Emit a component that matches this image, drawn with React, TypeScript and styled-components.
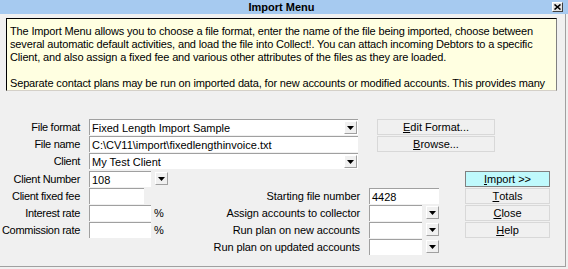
import styled, { createGlobalStyle } from 'styled-components'

const GlobalStyle = createGlobalStyle`
  html, body {
    margin: 0;
    padding: 0;
  }
  body {
    width: 568px;
    height: 269px;
    overflow: hidden;
    background: #f0f0f0;
    font-family: "Liberation Sans", Arial, sans-serif;
    font-size: 11px;
    color: #000;
  }
`

const INFO_TEXT = [
  'The Import Menu allows you to choose a file format, enter the name of the file being imported, choose between several automatic default activities, and load the file into Collect!. You can attach incoming Debtors to a specific Client, and also assign a fixed fee and various other attributes of the files as they are loaded.',
  'Separate contact plans may be run on imported data, for new accounts or modified accounts. This provides many',
]

const ArrowButton = ({ inset }: { inset?: boolean }) => (
  <ArrowBox $inset={inset}>
    <svg width="7" height="4" viewBox="0 0 7 4">
      <path d="M0 0h7L3.5 4z" fill="#000" />
    </svg>
  </ArrowBox>
)

const Combo = ({ value }: { value?: string }) => (
  <ComboField>
    <FieldText>{value}</FieldText>
    <ArrowButton inset />
  </ComboField>
)

const SplitCombo = ({ width }: { width: number }) => (
  <SplitWrap>
    <TextField $width={width} />
    <ArrowButton />
  </SplitWrap>
)

const App = () => {
  return (
    <Window>
      <GlobalStyle />
      <TitleBar>
        <span />
        <Title>Import Menu</Title>
        <CloseButton>
          <svg width="7" height="6" viewBox="0 0 7 6">
            <path d="M0.5 0.5l6 5M6.5 0.5l-6 5" stroke="#000" strokeWidth="1.6" />
          </svg>
        </CloseButton>
      </TitleBar>
      <Panel>
        <InfoBox>
          {INFO_TEXT.map((p, i) => (
            <InfoParagraph key={i}>{p}</InfoParagraph>
          ))}
        </InfoBox>

        <TopForm>
          <Label>File format</Label>
          <Combo value="Fixed Length Import Sample" />
          <span />
          <Button>
            <u>E</u>dit Format...
          </Button>

          <Label>File name</Label>
          <TextField>
            <FieldText>C:\CV11\import\fixedlengthinvoice.txt</FieldText>
          </TextField>
          <span />
          <Button>
            <u>B</u>rowse...
          </Button>

          <Label>Client</Label>
          <Combo value="My Test Client" />
        </TopForm>

        <BottomForm>
          <Label>Client Number</Label>
          <TextField $width={62}>
            <FieldText>108</FieldText>
          </TextField>
          <ArrowCell>
            <ArrowButton />
          </ArrowCell>
          <Skip $span={3} />
          <Button $primary>
            <u>I</u>mport &gt;&gt;
          </Button>

          <Label>Client fixed fee</Label>
          <TextField $width={55} />
          <span />
          <RightLabel>Starting file number</RightLabel>
          <TextField $width={70}>
            <FieldText>4428</FieldText>
          </TextField>
          <span />
          <Button>
            <u>T</u>otals
          </Button>

          <Label>Interest rate</Label>
          <TextField $width={62} />
          <Percent>%</Percent>
          <RightLabel>Assign accounts to collector</RightLabel>
          <SplitCombo width={53} />
          <span />
          <Button>
            <u>C</u>lose
          </Button>

          <Label>Commission rate</Label>
          <TextField $width={62} />
          <Percent>%</Percent>
          <RightLabel>Run plan on new accounts</RightLabel>
          <SplitCombo width={53} />
          <span />
          <Button>
            <u>H</u>elp
          </Button>

          <Skip $span={3} />
          <RightLabel>Run plan on updated accounts</RightLabel>
          <SplitCombo width={53} />
        </BottomForm>
      </Panel>
    </Window>
  )
}

const Window = styled.div`
  width: 568px;
  height: 269px;
  display: flex;
  flex-direction: column;
  background: #f0f0f0;
`

const TitleBar = styled.div`
  height: 14px;
  display: grid;
  grid-template-columns: 1fr auto 1fr;
  align-items: center;
  background: #a6caf0;
  padding: 0 5px 0 0;
`

const Title = styled.span`
  font-weight: bold;
  font-size: 11px;
  line-height: 14px;
  color: #000;
`

const CloseButton = styled.div`
  justify-self: end;
  width: 11px;
  height: 10px;
  box-sizing: border-box;
  display: flex;
  align-items: center;
  justify-content: center;
  background: #e4e4e4;
  border-top: 1px solid #fff;
  border-left: 1px solid #fff;
  border-right: 1px solid #404040;
  border-bottom: 1px solid #404040;
`

const Panel = styled.div`
  width: 566px;
  height: 253px;
  box-sizing: border-box;
  padding-top: 4px;
  border-right: 1px solid #a0a0a0;
  border-bottom: 1px solid #a0a0a0;
`

const InfoBox = styled.div`
  margin: 0 8px 0 6px;
  height: 73px;
  box-sizing: border-box;
  overflow: hidden;
  background: #ffffe1;
  border-top: 1px solid #000;
  border-left: 1px solid #000;
  border-right: 1px solid #808080;
  border-bottom: 1px solid #d4d0c8;
  padding: 6px 2px 0 3px;
  line-height: 13px;
  letter-spacing: -0.15px;
`

const InfoParagraph = styled.p`
  margin: 0 0 13px 0;
`

const TopForm = styled.div`
  margin-top: 28px;
  display: grid;
  grid-template-columns: 89px 269px 19px 118px;
  grid-auto-rows: 17px;
`

const BottomForm = styled.div`
  margin-top: 1px;
  display: grid;
  grid-template-columns: 89px 62px 18px 200px 71px 25px 85px;
  grid-auto-rows: 17px;
`

const Label = styled.div`
  text-align: right;
  padding-right: 9px;
  line-height: 16px;
  white-space: nowrap;
  letter-spacing: -0.3px;
`

const RightLabel = styled(Label)`
  padding-right: 9px;
  letter-spacing: -0.1px;
`

const Skip = styled.span<{ $span: number }>`
  grid-column: span ${(p) => p.$span};
`

const FieldText = styled.span`
  padding-left: 2px;
  line-height: 14px;
  white-space: nowrap;
  overflow: hidden;
  flex: 1;
`

const TextField = styled.div<{ $width?: number }>`
  width: ${(p) => (p.$width ? `${p.$width}px` : 'auto')};
  height: 16px;
  box-sizing: border-box;
  display: flex;
  align-items: center;
  background: #fff;
  border-top: 1px solid #a0a0a0;
  border-left: 1px solid #a0a0a0;
`

const ComboField = styled(TextField)`
  padding-right: 1px;
`

const SplitWrap = styled.div`
  display: flex;
  align-items: flex-start;
  gap: 4px;
`

const ArrowBox = styled.div<{ $inset?: boolean }>`
  width: 13px;
  height: 13px;
  margin-top: ${(p) => (p.$inset ? '0' : '1px')};
  flex: none;
  box-sizing: border-box;
  display: flex;
  align-items: center;
  justify-content: center;
  background: #f0f0f0;
  border-top: 1px solid #fff;
  border-left: 1px solid #fff;
  border-right: 1px solid #a0a0a0;
  border-bottom: 1px solid #a0a0a0;
`

const ArrowCell = styled.div`
  padding-left: 4px;
`

const Percent = styled.div`
  padding-left: 3px;
  line-height: 16px;
`

const Button = styled.div<{ $primary?: boolean }>`
  height: 16px;
  box-sizing: border-box;
  display: flex;
  align-items: center;
  justify-content: center;
  line-height: 14px;
  background: ${(p) => (p.$primary ? '#bff9fc' : '#f0f0f0')};
  border: 1px solid ${(p) => (p.$primary ? '#808080' : '#a0a0a0')};
  border-top-color: ${(p) => (p.$primary ? '#808080' : '#fff')};
  border-left-color: ${(p) => (p.$primary ? '#808080' : '#fff')};
  outline: ${(p) => (p.$primary ? 'none' : '1px solid #d8d8d8')};
  outline-offset: -1px;
  white-space: nowrap;

  u {
    text-decoration: underline;
    text-underline-offset: 1px;
  }
`

export default App
